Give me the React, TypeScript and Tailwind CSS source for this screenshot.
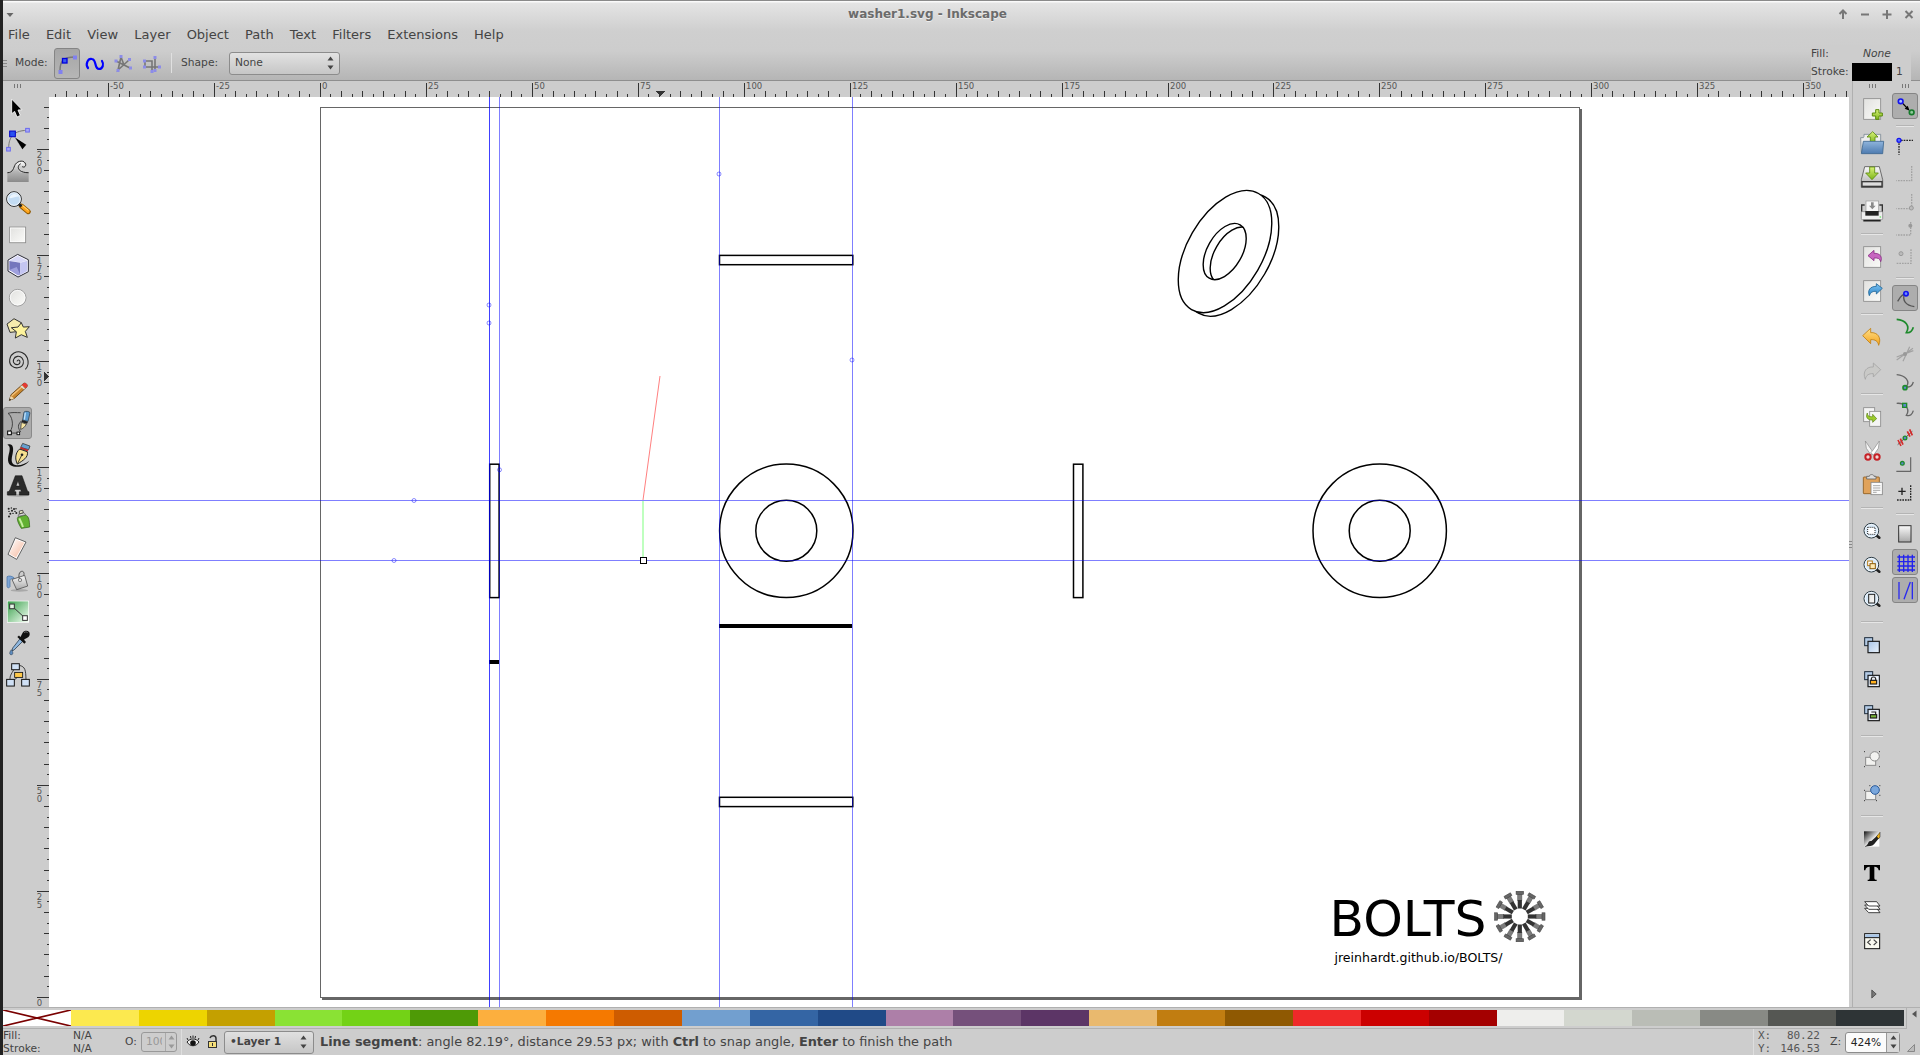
import React from "react";
import type { ReactNode } from "react";

const range = (a: number, b: number) => Array.from({ length: b - a + 1 }, (_, i) => a + i);

const SWATCHES = [
  "#fce94f", "#edd400", "#c4a000", "#8ae234", "#73d216", "#4e9a06", "#fcaf3e", "#f57900", "#ce5c00",
  "#729fcf", "#3465a4", "#204a87", "#ad7fa8", "#75507b", "#5c3566", "#e9b96e", "#c17d11", "#8f5902",
  "#ef2929", "#cc0000", "#a40000", "#eeeeec", "#d3d7cf", "#babdb6", "#888a85", "#555753", "#2e3436",
];

const MENUS = ["File", "Edit", "View", "Layer", "Object", "Path", "Text", "Filters", "Extensions", "Help"];

function Gradients() {
  return (
    <svg className="absolute h-0 w-0" aria-hidden="true">
      <defs>
        <linearGradient id="gGreen" x1="0" y1="0" x2="0" y2="1"><stop offset="0" stopColor="#d9f27a" /><stop offset="1" stopColor="#7cb518" /></linearGradient>
        <linearGradient id="gBlue" x1="0" y1="0" x2="0" y2="1"><stop offset="0" stopColor="#8fb4dc" /><stop offset="1" stopColor="#4d7bb0" /></linearGradient>
        <linearGradient id="gPale" x1="0" y1="0" x2="1" y2="1"><stop offset="0" stopColor="#a9c4e6" /><stop offset="1" stopColor="#eaf3fc" /></linearGradient>
        <linearGradient id="gSky" x1="0" y1="0" x2="0" y2="1"><stop offset="0" stopColor="#7cc4f4" /><stop offset="1" stopColor="#2f86c8" /></linearGradient>
        <linearGradient id="gGold" x1="0" y1="0" x2="0" y2="1"><stop offset="0" stopColor="#ffe08a" /><stop offset="1" stopColor="#f3a21c" /></linearGradient>
        <linearGradient id="gPaper" x1="0" y1="0" x2="1" y2="1"><stop offset="0" stopColor="#e2e2e0" /><stop offset="1" stopColor="#fafaf8" /></linearGradient>
        <linearGradient id="gMetal" x1="0" y1="0" x2="0" y2="1"><stop offset="0" stopColor="#fafafa" /><stop offset="1" stopColor="#a8a8a8" /></linearGradient>
        <linearGradient id="gWave" x1="0" y1="0" x2="0" y2="1"><stop offset="0" stopColor="#fff" /><stop offset="0.5" stopColor="#b5b5b5" /><stop offset="1" stopColor="#8a8a8a" /></linearGradient>
        <linearGradient id="gSkin" x1="0" y1="0" x2="1" y2="1"><stop offset="0" stopColor="#fff" /><stop offset="1" stopColor="#f5b79c" /></linearGradient>
        <linearGradient id="gMint" x1="0" y1="0" x2="1" y2="1"><stop offset="0" stopColor="#3aa04c" /><stop offset="1" stopColor="#f4fff4" /></linearGradient>
        <linearGradient id="gInk" x1="0" y1="0" x2="1" y2="1"><stop offset="0" stopColor="#111" /><stop offset="0.6" stopColor="#fff" /></linearGradient>
      </defs>
    </svg>
  );
}

/* ---------- left tool icons ---------- */

const NODE = { fill: "#a9a9f5", stroke: "#6b6bf0", strokeWidth: 3 };

const TOOLS: { name: string; art: ReactNode }[] = [
  { name: "Select", art: <path d="M-19-29V15L-10 8L-3 25L7 20L0 4L12 3Z" fill="#000" stroke="#fff" strokeWidth="2.5" /> },
  {
    name: "Node", art: <g>
      <path d="M-28 26C-28 0-20-28 28-28" fill="none" stroke="#777" strokeWidth="3" />
      <rect x="-34" y="23" width="11" height="11" {...NODE} /><rect x="23" y="-34" width="11" height="11" {...NODE} />
      <path d="M-12-10L26 15L13 30Z" fill="#000" stroke="#fff" strokeWidth="1.5" />
      <rect x="-25" y="-26" width="17" height="17" fill="#2a52f0" stroke="#0000c8" strokeWidth="3" />
    </g>,
  },
  {
    name: "Tweak", art: <g>
      <path d="M-32 4C-14 4-14-12-8-22C0-34 18-36 22-24C24-16 18-12 12-16C4-22-2-10 2-2C6 4 16 4 32 4V31H-32Z" fill="url(#gWave)" />
      <path d="M-32 3C-14 3-14-12-8-22C0-34 20-36 23-22C24-14 16-12 12-16M8-24C-4-18-4 3 32 3" fill="none" stroke="#222" strokeWidth="3" />
    </g>,
  },
  {
    name: "Zoom", art: <g>
      <path d="M10 10L31 27" stroke="#8f5902" strokeWidth="15" strokeLinecap="round" /><path d="M11 10L30 26" stroke="#ffa51e" strokeWidth="10" strokeLinecap="round" /><path d="M12 7L31 23" stroke="#ffe08a" strokeWidth="3" />
      <path d="M1 3L11 11" stroke="#222" strokeWidth="8" />
      <circle cx="-12" cy="-11" r="22" fill="#c3dcf3" stroke="#222" strokeWidth="3" /><circle cx="-12" cy="-11" r="19" fill="none" stroke="#fff" strokeWidth="2.5" /><path d="M-26-14C-22-28-4-30 4-18C-6-20-14-12-26-14" fill="#eaf4fd" />
    </g>,
  },
  { name: "Rectangle", art: <g><rect x="-25" y="-23" width="48" height="47" fill="#f0f0ef" stroke="#8a8a8a" strokeWidth="2.5" /><rect x="-22" y="-20" width="42" height="41" fill="url(#gPaper)" stroke="#fff" strokeWidth="2" /></g> },
  {
    name: "Box", art: <g>
      <path d="M-1-34L31-18V18L0 34L-30 16V-17Z" fill="#fff" stroke="#2b2b3a" strokeWidth="3" strokeLinejoin="round" />
      <path d="M-1-30L27-16L7-10L-26-15Z" fill="#d9d9f8" /><path d="M-26-14L7-9V27L-26 13Z" fill="#7576bd" /><path d="M7-9L28-15V16L7 28Z" fill="#c4c5f2" /><path d="M-26 13L-4 4L7 27L0 29Z" fill="#9fa0dd" />
    </g>,
  },
  { name: "Ellipse", art: <g><circle r="25" cx="-1" fill="#eee" stroke="#909090" strokeWidth="2.5" /><circle r="22" cx="-1" fill="url(#gPaper)" stroke="#fff" strokeWidth="2" /></g> },
  {
    name: "Star", art: <g stroke="#333" strokeWidth="3" strokeLinejoin="round">
      <path d="M-12-30L10-18L4 8L-24 11L-33-14Z" fill="#f6ecad" />
      <path d="M10-18L16-5L34-6L22 8L28 26L10 18L-8 28L-5 9L-20-3L0-5Z" fill="#fdf39c" />
    </g>,
  },
  { name: "Spiral", art: <path d="M-3 2C-1-4 6-3 6 4C6 12-4 14-10 9C-18 2-13-11-2-13C10-15 18-4 16 7C13 22-6 25-17 17C-31 6-25-16-12-23C4-32 22-24 28-8C33 6 30 18 22 26" fill="none" stroke="#2a2a2a" strokeWidth="3.2" /> },
  {
    name: "Pencil", art: <g>
      <path d="M-26 26L-21 9L17-25C22-28 30-21 27-15L-11 20Z" fill="#c9872f" stroke="#5b3a0c" strokeWidth="2.5" />
      <path d="M-19 12L18-20" stroke="#f3c27b" strokeWidth="4" /><path d="M15-24C21-30 32-22 27-14L22-11L12-20Z" fill="#e53935" /><path d="M11-19L21-10L18-7L7-16Z" fill="#ddd" /><path d="M-26 26L-22 12L-12 20Z" fill="#f0d6a8" /><path d="M-27 27L-25 20L-20 24Z" fill="#222" />
    </g>,
  },
  {
    name: "Pen", art: <g>
      <path d="M-26 28C-8 10-20-24-30-28C-20-32-4-30 8-30M-20 31H2M8 28C-6 8 6 2 8-4" fill="none" stroke="#444" strokeWidth="3" />
      <path d="M14-8L18-32C22-36 34-34 36-30L30-4Z" fill="#5b9bd0" stroke="#234" strokeWidth="2" /><path d="M22-30L19-9" stroke="#c4e2f7" strokeWidth="4" /><path d="M12-8L30-3L27 3L10-2Z" fill="#222" /><path d="M10-1L25 4C22 12 14 18 8 20Z" fill="#f4e3a1" stroke="#222" strokeWidth="2" />
      <rect x="-31" y="25" width="11" height="11" fill="#fff" stroke="#000" strokeWidth="3" /><rect x="-3" y="28" width="8" height="8" fill="#fff" stroke="#000" strokeWidth="2.5" />
    </g>,
  },
  {
    name: "Calligraphy", art: <g>
      <path d="M-32-30C-16-36-12-22-16-4C-20 14-22 26-8 31C6 34 20 28 34 18C22 34 4 38-14 35C-36 30-30 8-26-8C-24-20-24-26-32-30Z" fill="#111" />
      <path d="M14-34L36-26L32-15L8-22Z" fill="#69a0cf" stroke="#222" strokeWidth="2" /><path d="M8-23L31-15L29-10L6-18Z" fill="#c62828" />
      <path d="M5-17L28-9C32 8 14 18-2 28C-10 12-8-6 5-17Z" fill="#f7e08f" stroke="#222" strokeWidth="3" /><path d="M-1 26L11 2" stroke="#222" strokeWidth="2.5" /><circle cx="12" cy="0" r="4" fill="#222" />
    </g>,
  },
  {
    name: "Text", art: <g>
      <ellipse cx="0" cy="29" rx="32" ry="4" fill="#a5a5a5" />
      <path fillRule="evenodd" d="M-32 28V18C-27 18-25 15-23 9L-8-30H12L27 12C29 17 30 18 33 18V28H4V18H10L8 11H-9L-11 18H-6V28ZM-6 1H5L0-15Z" fill="#2b2b2b" stroke="#0c0c0c" strokeWidth="1.5" />
    </g>,
  },
  {
    name: "Spray", art: <g>
      <path d="M0-2L22-8C34-4 34 10 35 28L10 32C4 22-2 12-2 2Z" fill="#62b132" stroke="#2c5c12" strokeWidth="2" /><path d="M4 2C8 10 12 18 15 28" stroke="#c6ef9f" strokeWidth="6" fill="none" />
      <path d="M0-4L2-10L18-15L23-9Z" fill="#ddd" stroke="#555" strokeWidth="2" /><path d="M4-12V-20L14-22L16-15Z" fill="#f2f2ce" stroke="#333" strokeWidth="2.5" />
      {[[-28, -27], [-20, -29], [-12, -26], [-27, -19], [-18, -21], [-9, -19], [-23, -12], [-15, -13], [-27, -4], [-6, -27], [-5, -14]].map(([x, y], i) => <circle key={i} cx={x} cy={y} r={i % 2 ? 2.2 : 3} fill="#222" />)}
    </g>,
  },
  { name: "Eraser", art: <g><path d="M-8-33L24-20L-4 32L-30 17Z" fill="#fff" stroke="#444" strokeWidth="2.5" strokeLinejoin="round" /><path d="M-6-28L19-18L-6 26L-26 15Z" fill="url(#gSkin)" /></g> },
  {
    name: "Bucket", art: <g>
      <ellipse cx="4" cy="29" rx="26" ry="4" fill="#a8a8a8" /><path d="M-33-12C-28-16-18-14-12-9L-16-4C-20-8-24-6-24 2V18C-27 23-32 22-33 17Z" fill="#7ea6d6" stroke="#3f6ca3" strokeWidth="2" />
      <path d="M-18-4L20-16L29 16L-4 27Z" fill="url(#gMetal)" stroke="#555" strokeWidth="2.5" strokeLinejoin="round" /><path d="M4-6C0-20 6-30 14-28C20-26 18-18 17-15" fill="none" stroke="#555" strokeWidth="3" /><circle cx="6" cy="-2" r="5" fill="#ddd" stroke="#555" strokeWidth="2" />
    </g>,
  },
  {
    name: "Gradient", art: <g>
      <rect x="-33" y="-33" width="66" height="66" fill="#fff" /><rect x="-31" y="-31" width="62" height="62" fill="url(#gMint)" /><path d="M-18-17L20 18" stroke="#333" strokeWidth="3" />
      <rect x="-25" y="-23" width="14" height="14" fill="#e4f5e6" stroke="#333" strokeWidth="3" /><rect x="14" y="12" width="14" height="14" fill="#fff" stroke="#333" strokeWidth="3" />
    </g>,
  },
  {
    name: "Dropper", art: <g>
      <path d="M6-12L14-4L-12 22L-18 24L-16 16Z" fill="#8fb7df" stroke="#345" strokeWidth="2.5" /><path d="M-2-17L19 3L24-2L18-9C26-16 34-16 35-25C37-37 20-40 14-30C10-24 10-20 7-17L3-22Z" fill="#111" /><path d="M18-30C22-34 28-33 29-29" fill="none" stroke="#777" strokeWidth="2.5" />
      <path d="M-20 21C-27 30-26 36-20 36C-14 36-14 28-20 21Z" fill="#5d8cbf" stroke="#234" strokeWidth="1.5" />
    </g>,
  },
  {
    name: "Connector", art: <g>
      <path d="M-12-16C-22 0-24 4-24 14M4-28C22-24 23-14 24 14M-2 8L-14 18" fill="none" stroke="#222" strokeWidth="2.5" />
      <rect x="-19" y="-33" width="23" height="18" fill="#cfe0f5" stroke="#111" strokeWidth="3" /><rect x="-10" y="-7" width="24" height="15" fill="#ffc94a" stroke="#111" strokeWidth="2.5" /><rect x="-34" y="14" width="23" height="20" fill="#cfe0f5" stroke="#111" strokeWidth="3" /><rect x="11" y="14" width="23" height="20" fill="#cfe0f5" stroke="#111" strokeWidth="3" />
    </g>,
  },
];

/* ---------- command bar icons ---------- */

const Sheet = () => <rect x="-25" y="-31" width="51" height="62" fill="url(#gPaper)" stroke="#8a8a8a" strokeWidth="2.5" />;
const Lens = () => (
  <g><path d="M12 12L22 20" stroke="#222" strokeWidth="8" strokeLinecap="round" /><circle cx="-2" cy="-1" r="22" fill="#d6e8f8" stroke="#2c3a42" strokeWidth="3" /><circle cx="-2" cy="-1" r="18.5" fill="none" stroke="#fff" strokeWidth="2" /></g>
);
const Squares = () => (
  <g><rect x="-22" y="-22" width="24" height="24" fill="#b4cbe6" stroke="#1c2a3a" strokeWidth="3" /><rect x="-12" y="-11" width="34" height="34" fill="url(#gPale)" stroke="#1a1a1a" strokeWidth="3.5" /></g>
);

const COMMANDS: { name: string; art?: ReactNode }[] = [
  { name: "New", art: <g><Sheet /><path d="M11 2H21V12H31V21H21V31H11V21H1V12H11Z" fill="url(#gGreen)" stroke="#5b8a0d" strokeWidth="3" /></g> },
  { name: "Open", art: <g><path d="M-34-16H-26L-24-20V-26H26V28H-32Z" fill="#eee" stroke="#7b8894" strokeWidth="2.5" /><path d="M2-34L18-18H9V0H-5V-18H-15Z" fill="url(#gGreen)" stroke="#5b8a0d" strokeWidth="2.5" /><path d="M-26-5H35L32 32H-32Z" fill="url(#gBlue)" stroke="#3f678f" strokeWidth="2.5" /></g> },
  { name: "Save", art: <g><path d="M-22-31H22L32 8V31H-32V8Z" fill="url(#gMetal)" stroke="#555" strokeWidth="2.5" /><path d="M-32 12H32V31H-32Z" fill="#3a3a3a" /><rect x="-28" y="16" width="56" height="10" fill="#ddd" /><path d="M-7-30H8V-12H19L0 8L-19-12H-7Z" fill="url(#gGreen)" stroke="#5b8a0d" strokeWidth="2.5" /></g> },
  { name: "Print", art: <g><path d="M-31 2V-18H-22M31 2V-18H22" fill="none" stroke="#333" strokeWidth="4" /><rect x="-18" y="-30" width="38" height="32" fill="#f6f6f6" stroke="#999" strokeWidth="2" /><path d="M-3-26H5V-16H11L1-5L-9-16H-3Z" fill="#8a8a8a" /><rect x="-32" y="2" width="64" height="24" rx="3" fill="#eee" stroke="#777" strokeWidth="2" /><rect x="-20" y="0" width="40" height="14" fill="#222" /><path d="M-26 29H26" stroke="#222" strokeWidth="5" /><circle cx="25" cy="18" r="2.5" fill="#5ce65c" /></g> },
  { name: "sep" },
  { name: "Import", art: <g><Sheet /><path d="M-12-4L6-20V-11C24-12 32 0 26 14C24 5 18 2 6 3V11Z" fill="#c765c0" stroke="#8a2f85" strokeWidth="2.5" strokeLinejoin="round" /></g> },
  { name: "Export", art: <g><Sheet /><path d="M31-8L13-22V-14C-6-14-14-2-8 14C-5 4 2 0 13 1V9Z" fill="url(#gSky)" stroke="#1f6596" strokeWidth="2.5" strokeLinejoin="round" /></g> },
  { name: "sep" },
  { name: "Undo", art: <path d="M-28-4L-4-26V-13C16-15 30 2 20 25C18 13 10 7-4 8V20Z" fill="url(#gGold)" stroke="#c07f14" strokeWidth="2.5" strokeLinejoin="round" /> },
  { name: "Redo", art: <path d="M26-4L4-24V-12C-16-14-30 2-20 25C-18 13-10 7 4 8V18Z" fill="#c9c9c7" stroke="#a5a5a5" strokeWidth="2.5" strokeLinejoin="round" /> },
  { name: "sep" },
  { name: "Duplicate", art: <g><rect x="-25" y="-28" width="33" height="42" fill="#f4f4f4" stroke="#8a8a8a" strokeWidth="2.5" /><rect x="-7" y="-17" width="33" height="45" fill="#f4f4f4" stroke="#8a8a8a" strokeWidth="2.5" /><path d="M-14-12C-14-2-8-1 2-1V-8L14 5L2 16V9C-14 10-20 0-14-12Z" fill="#9ccb2c" stroke="#56800f" strokeWidth="2" /></g> },
  { name: "Cut", art: <g><path d="M-20-30L-17-8L-3 12L4 6L-2-4Z" fill="#f4f4f4" stroke="#888" strokeWidth="2" /><path d="M22-30L19-8L5 12L-4 6L4-4Z" fill="#fff" stroke="#888" strokeWidth="2" /><circle cx="-12" cy="18" r="8" fill="#f0d6d6" stroke="#c62026" strokeWidth="6" /><circle cx="15" cy="18" r="8" fill="#f0d6d6" stroke="#c62026" strokeWidth="6" /></g> },
  { name: "Paste", art: <g><rect x="-26" y="-24" width="48" height="50" rx="2" fill="#e0a25a" stroke="#8b5a1d" strokeWidth="2.5" /><path d="M-16-18V-26H-8C-8-33 6-33 6-26H12V-18Z" fill="#ddd" stroke="#666" strokeWidth="2.5" /><rect x="-3" y="-8" width="34" height="37" fill="#fafafa" stroke="#888" strokeWidth="2.5" /><path d="M3 2H25M3 9H25M3 16H25M3 22H14" stroke="#999" strokeWidth="2.5" /></g> },
  { name: "sep" },
  { name: "Zoom selection", art: <g><Lens /><rect x="-13" y="-11" width="22" height="21" fill="#fff" stroke="#222" strokeWidth="3" strokeDasharray="3 3" /></g> },
  { name: "Zoom drawing", art: <g><Lens /><rect x="-13" y="-12" width="14" height="14" fill="#fff" stroke="#b57a14" strokeWidth="3" /><rect x="-6" y="-4" width="16" height="15" fill="#ffe9b0" stroke="#8a5a0a" strokeWidth="3" /></g> },
  { name: "Zoom page", art: <g><Lens /><rect x="-10" y="-14" width="18" height="26" fill="url(#gPaper)" stroke="#222" strokeWidth="3" /></g> },
  { name: "sep" },
  { name: "Duplicate object", art: <Squares /> },
  { name: "Clone", art: <g><Squares /><rect x="-9" y="-8" width="28" height="28" fill="#f3f7fc" /><path d="M-2 5V0C-2-8 11-8 11 0V5" fill="none" stroke="#222" strokeWidth="3.5" /><rect x="-5" y="4" width="19" height="11" fill="#ffb01f" stroke="#1a1a1a" strokeWidth="3.5" /></g> },
  { name: "Unlink clone", art: <g><Squares /><rect x="-9" y="-8" width="28" height="28" fill="#f3f7fc" /><path d="M-2-3H11V5" fill="none" stroke="#222" strokeWidth="3.5" /><rect x="-5" y="5" width="19" height="10" fill="#76b33a" stroke="#1a1a1a" strokeWidth="3.5" /></g> },
  { name: "sep" },
  { name: "Group", art: <g><rect x="-19" y="-5" width="30" height="24" fill="#f2f2f0" stroke="#8a8a8a" strokeWidth="3" /><circle cx="8" cy="-8" r="14" fill="#f2f2f0" stroke="#8a8a8a" strokeWidth="3" /><path d="M-24-22H-21M-24 23H-21M21 23H24M21-22H24" stroke="#333" strokeWidth="3" /></g> },
  { name: "Ungroup", art: <g><rect x="-19" y="-5" width="30" height="25" fill="#f2f2f0" stroke="#8a8a8a" strokeWidth="3" /><circle cx="9" cy="-9" r="13" fill="#7aa7dc" stroke="#2c5c9c" strokeWidth="3" /><path d="M-24-8H-21M-24 23H-21M12 23H15M-8-22H-5M22-22H25M22 7H25" stroke="#333" strokeWidth="3" /></g> },
  { name: "sep" },
  { name: "Fill and stroke", art: <g><rect x="-24" y="-23" width="46" height="46" fill="url(#gInk)" /><path d="M-21 22C-8 16-14 4-2 6L18-12L22-4L6 16C0 22-8 22-21 23Z" fill="#222" /><path d="M14-8L24-20V-6L19 0Z" fill="#f2b41c" stroke="#111" strokeWidth="1.5" /></g> },
  { name: "Text and font", art: <path d="M-24-24H24V-8H20C19-15 15-19 7-19V14C7 19 9 20 14 20V24H-13V20C-8 20-7 19-7 14V-19C-15-19-19-15-20-8H-24Z" fill="#000" /> },
  { name: "Layers", art: <g fill="#fff" stroke="#222" strokeWidth="2.5" strokeLinejoin="round"><path d="M-22 4H14L24 17H-10Z" /><path d="M-22-6H14L24 7H-10Z" /><path d="M-22-16H14L24-3H-10Z" /></g> },
  { name: "XML editor", art: <g><rect x="-22" y="-22" width="45" height="45" fill="#f8f8ef" stroke="#111" strokeWidth="3" /><rect x="-20" y="-20" width="41" height="9" fill="#a9c6e8" /><path d="M-22-10H22" stroke="#111" strokeWidth="3" /><path d="M-4-4L-13 4L-4 12M5-4L14 4L5 12" fill="none" stroke="#444" strokeWidth="3.5" /></g> },
];

/* ---------- snap bar icons ---------- */

const DASH = { fill: "none", strokeWidth: 4, strokeDasharray: "5 3" };

const SNAPS: { name: string; on?: boolean; art?: ReactNode }[] = [
  { name: "Snap", on: true, art: <g><path d="M-7-8L8 8" stroke="#000" strokeWidth="4" /><path d="M14 14L-1 8L8-1Z" fill="#000" /><circle cx="-13" cy="-14" r="7" fill="#a9c0ff" stroke="#1414ee" strokeWidth="5" /><circle cx="20" cy="19" r="7" fill="#8fc79a" stroke="#157a2a" strokeWidth="5" /></g> },
  { name: "sep" },
  { name: "Snap bounding box", art: <g><path d="M-12-17H24M-18-8V26" stroke="#222" {...DASH} /><circle cx="-18" cy="-17" r="6" fill="#5a78ff" stroke="#1414ee" strokeWidth="4" /></g> },
  { name: "Snap bbox edges", art: <path d="M20-24V20H-26" stroke="#a2a2a2" {...DASH} /> },
  { name: "Snap bbox corners", art: <g><path d="M20-24V20H-26" stroke="#a2a2a2" {...DASH} /><circle cx="19" cy="18" r="6" fill="#bbb" stroke="#9a9a9a" strokeWidth="3" /></g> },
  { name: "Snap bbox midpoints", art: <g><path d="M17-24V15H-26" stroke="#a2a2a2" {...DASH} /><circle cx="16" cy="-13" r="6" fill="#999" /></g> },
  { name: "Snap bbox centers", art: <g><path d="M18-26V16H-26" stroke="#a2a2a2" {...DASH} /><circle cx="-12" cy="-13" r="6" fill="#bbb" stroke="#9a9a9a" strokeWidth="3" /></g> },
  { name: "sep" },
  { name: "Snap nodes", on: true, art: <g><path d="M-22 10C-14-6-4-14 8-14M-2-11C-8 8 2 22 28 26" fill="none" stroke="#555" strokeWidth="4" /><circle cx="3" cy="-13" r="6.5" fill="#6b8cff" stroke="#1414ee" strokeWidth="5" /></g> },
  { name: "Snap to paths", art: <path d="M-25-20C2-18 16 0 4 20C16 22 22 14 25 4" fill="none" stroke="#1e8a2c" strokeWidth="5" /> },
  { name: "Snap intersections", art: <g><path d="M-25 18L24-17M-25 9L25-10M-6 22L14-22" stroke="#a2a2a2" strokeWidth="3.5" /><circle cx="0" cy="0" r="6" fill="#999" /></g> },
  { name: "Snap cusp nodes", art: <g><path d="M-25-22C2-20 16-2 4 14C16 18 22 10 25 0" fill="none" stroke="#666" strokeWidth="4" /><circle cx="0" cy="17" r="6" fill="#5c86d0" stroke="#1e8a2c" strokeWidth="5" /></g> },
  { name: "Snap smooth nodes", art: <g><path d="M-25-20C2-22 16-2 4 16C16 20 22 12 25 2" fill="none" stroke="#666" strokeWidth="4" /><rect x="-7" y="-20" width="12" height="12" fill="#5c86d0" stroke="#1e8a2c" strokeWidth="4" /></g> },
  { name: "Snap line midpoints", art: <g><path d="M-22 20L22-20" stroke="#555" strokeWidth="3" /><path d="M-21 6L-12 24M-14 2L-6 20M7-20L15-4M14-26L22-8" stroke="#d42a2a" strokeWidth="5" /><circle cx="0" cy="0" r="5.5" fill="#5c86d0" stroke="#1e8a2c" strokeWidth="4" /></g> },
  { name: "Snap object centers", art: <g><path d="M17-26V16H-26" fill="none" stroke="#666" strokeWidth="3.5" /><circle cx="-8" cy="-8" r="5.5" fill="#5c86d0" stroke="#1e8a2c" strokeWidth="4" /></g> },
  { name: "Snap rotation centers", art: <g><path d="M17-26V18H-26" stroke="#222" {...DASH} /><path d="M-20-8H2M-9-19V3" stroke="#222" strokeWidth="4" /></g> },
  { name: "sep" },
  { name: "Snap page border", art: <rect x="-19" y="-25" width="37" height="49" fill="url(#gMetal)" stroke="#333" strokeWidth="3" /> },
  { name: "Snap grid", on: true, art: <path d="M-23-15H30M-23-1H30M-23 12H30M-23 24H30M-17-22V30M-4-22V30M9-22V30M22-22V30" stroke="#2222ee" strokeWidth="4" /> },
  { name: "Snap guides", on: true, art: <path d="M-18-24V28M22-24V28M-3 28L16-24" stroke="#2a2af0" strokeWidth="4" /> },
];

function Sep({ wide }: { wide?: boolean }) {
  return (
    <div className="flex h-3 items-center justify-center">
      <div className={wide ? "h-0.5 w-[22px] border-t border-[#b4b4b4] bg-[#e6e6e6]" : "h-0.5 w-[18px] border-t border-[#b4b4b4] bg-[#e6e6e6]"} />
    </div>
  );
}

function Grip() {
  return (
    <div className="flex h-1 justify-center gap-[2px]">
      <div className="w-px bg-[#777]" /><div className="w-px bg-[#777]" /><div className="w-px bg-[#777]" />
    </div>
  );
}

function Arrows({ dim }: { dim?: boolean }) {
  return (
    <svg className="h-3.5 w-[7px] shrink-0" viewBox="0 0 7 14"><path d="M3.500 .5L6.500 4.500H.5ZM.5 9.500H6.500L3.500 13.500Z" fill={dim ? "#999" : "#444"} /></svg>
  );
}

/* ---------- window top ---------- */

function Header() {
  return (
    <header className="flex h-[81px] shrink-0 flex-col border-t border-b border-t-[#8a8a8a] border-b-[#8f8f8f] bg-[linear-gradient(to_bottom,#fafafa_0,#fafafa_1px,#e4e4e4_2px,#cfcfcf_30px,#cdcdcd_50px,#b5b5b5_79px)]">
      <div className="relative flex h-[23px] shrink-0 items-center justify-between pl-[3px] pr-[5px]">
        <svg className="mt-1 h-2 w-2" viewBox="0 0 8 8"><path d="M.5 2H7.500L4 6Z" fill="#666" /></svg>
        <div className="absolute inset-x-0 top-[5px] pr-[68px] text-center text-[12px] leading-4 font-bold text-[#6b6b6b] [text-shadow:0_1px_0_#eee]">washer1.svg - Inkscape</div>
        <svg className="mt-0.5 h-3 w-20" viewBox="0 0 80 12" fill="none" stroke="#777" strokeWidth="2">
          <path d="M8 11V3M4.500 6L8 2.500L11.500 6M26 6.500H34M47.500 6.500H56.500M52 2V11M70.500 3L77.500 10M77.500 3L70.500 10" />
        </svg>
      </div>
      <nav className="flex h-[22px] shrink-0 items-center gap-[16.150px] pl-[5px] text-[13px] text-[#444]">
        {MENUS.map((m) => <span key={m}>{m}</span>)}
      </nav>
      <div className="flex h-[34px] items-center text-[10.700px] text-[#444]">
        <div className="flex w-1 flex-col gap-[2px]"><div className="h-px bg-[#888]" /><div className="h-px bg-[#888]" /><div className="h-px bg-[#888]" /></div>
        <span className="w-[47px] pl-2">Mode:</span>
        <div className="flex">
          <div className="h-[31px] w-[26px] rounded-[3px] border border-[#858585] bg-linear-to-b from-[#a6a6a6] to-[#b6b6b6]">
            <svg className="h-full w-full" viewBox="0 0 24 29"><path d="M5 22C5 12 8 8 20 8" fill="none" stroke="#777" strokeWidth="1.500" /><rect x="3.500" y="21" width="4" height="4" fill="#8080f0" /><rect x="18" y="6.500" width="4" height="4" fill="#8080f0" /><rect x="7.500" y="9.500" width="4.500" height="4.500" fill="#3a5af0" stroke="#00d" strokeWidth="1.300" /></svg>
          </div>
          <svg className="h-[31px] w-[29px]" viewBox="0 0 29 31"><path d="M8 20C5 16 8 10 12 11C17 12 14 21 19 21C23 21 24 16 22 13" fill="none" stroke="#00f" strokeWidth="2.200" strokeLinecap="round" /></svg>
          <svg className="h-[31px] w-[29px]" viewBox="0 0 29 31"><path d="M12 9L9 22L20 12M7 13L21 20M12 9L15 17" fill="none" stroke="#777" strokeWidth="1.600" /><g fill="#8c8ce8"><rect x="10.500" y="7" width="3" height="3" /><rect x="5.500" y="11.500" width="3" height="3" /><rect x="19" y="10" width="3" height="3" /><rect x="7.500" y="21" width="3" height="3" /><rect x="20" y="18.500" width="3" height="3" /></g></svg>
          <svg className="h-[31px] w-[29px]" viewBox="0 0 29 31"><path d="M17 10V22M7 13V19H22M7 13H14V23" fill="none" stroke="#777" strokeWidth="1.600" /><g fill="#8c8ce8"><rect x="15.500" y="8" width="3" height="3" /><rect x="5" y="11.500" width="3" height="3" /><rect x="5" y="17.500" width="3" height="3" /><rect x="20" y="17.500" width="3" height="3" /><rect x="12.500" y="22" width="3" height="3" /><rect x="15.500" y="21" width="3" height="3" /></g></svg>
        </div>
        <div className="ml-[4px] h-5 w-px bg-[#e0e0e0]" />
        <span className="w-[57px] pl-[9px]">Shape:</span>
        <div className="flex h-[23px] w-[111px] items-center justify-between rounded-[3px] border border-[#8c8c8c] bg-linear-to-b from-[#e2e2e2] to-[#c6c6c6] pr-[5px] pl-[5px]">None<Arrows /></div>
        <div className="z-10 mr-[9px] -mb-px ml-auto grid h-[36px] w-[100px] grid-cols-[41px_40px_1fr] grid-rows-2 self-end bg-[#cdcdcd]">
          <span className="leading-[17px]">Fill:</span><span className="pl-[11px] leading-[17px] whitespace-nowrap italic">None</span><span />
          <span className="leading-[18px]">Stroke:</span><span className="bg-black" /><span className="pl-[4px] leading-[18px]">1</span>
        </div>
      </div>
    </header>
  );
}

/* ---------- rulers and canvas ---------- */

const UNIT = 4.238;

function RulerX() {
  return (
    <svg className="block h-4 w-[1800px]" viewBox="49 81 1800 16" shapeRendering="crispEdges">
      {range(-25, 144).map((i) => {
        const x = Math.floor(320.4 + i * 2.5 * UNIT);
        const top = i % 10 === 0 ? 83 : i % 2 === 0 ? 91 : 94;
        return x >= 49 && x < 1849 ? <rect key={i} x={x} y={top} width="1" height={97 - top} fill="#333" /> : null;
      })}
      {range(-2, 14).map((i) => (
        <text key={i} x={Math.floor(320.4 + i * 25 * UNIT) + 2} y="89" fontSize="8.500" fill="#555">{i * 25}</text>
      ))}
      <path d="M656 91H665L660.500 96Z" fill="#333" />
    </svg>
  );
}

function RulerY() {
  return (
    <svg className="block h-[910px] w-[13px]" viewBox="36 97 13 910" shapeRendering="crispEdges">
      {range(0, 84).map((i) => {
        const y = Math.floor(997.2 - i * 2.5 * UNIT);
        const left = i % 10 === 0 ? 37 : i % 2 === 0 ? 44 : 47;
        return <rect key={i} x={left} y={y} width={49 - left} height="1" fill="#333" />;
      })}
      {range(0, 8).map((i) =>
        String(i * 25).split("").map((d, k) => (
          <text key={`${i}-${k}`} x="36.800" y={Math.floor(997.2 - i * 25 * UNIT) + 9 + k * 8} fontSize="8.500" fill="#555">{d}</text>
        ))
      )}
      <path d="M44 372V381L49 376.500Z" fill="#333" />
    </svg>
  );
}

function IsoWasher() {
  return (
    <g transform="translate(1150.200 170.200) scale(.3333)" fill="none" stroke="#000" strokeWidth="4.200">
      <clipPath id="hole"><ellipse rx="92.500" ry="52" transform="translate(223.500 244) rotate(-60)" /></clipPath>
      <ellipse rx="201" ry="113" transform="translate(245.500 255) rotate(-60)" />
      <ellipse rx="201" ry="113" transform="translate(224.500 244) rotate(-60)" fill="#fff" />
      <g clipPath="url(#hole)"><ellipse rx="92.500" ry="52" transform="translate(244.500 255) rotate(-60)" /></g>
      <ellipse rx="92.500" ry="52" transform="translate(223.500 244) rotate(-60)" />
    </g>
  );
}

function Canvas() {
  return (
    <svg className="block h-[910px] w-[1800px] bg-white" viewBox="49 97 1800 910">
      <g shapeRendering="crispEdges">
        <path d="M1579 109H1582V1000H322V997H1579Z" fill="#666" />
        <rect x="320.500" y="107.500" width="1259" height="890" fill="#fff" stroke="#666" />
      </g>
      <g fill="none" stroke="#000" strokeWidth="1.500">
        <rect x="719.500" y="255.400" width="133.300" height="9.300" />
        <rect x="719.500" y="797.300" width="133.300" height="9.300" />
        <rect x="489.700" y="464.200" width="9.400" height="133.400" />
        <rect x="1073.500" y="464.200" width="9.400" height="133.400" />
        <circle cx="786.300" cy="530.800" r="66.700" /><circle cx="786.300" cy="530.800" r="30.500" />
        <circle cx="1379.700" cy="530.800" r="66.700" /><circle cx="1379.700" cy="530.800" r="30.500" />
      </g>
      <rect x="719" y="624" width="133" height="4" /><rect x="489" y="660" width="10" height="4" />
      <IsoWasher />
      <g fill="#0000ff" fillOpacity=".5" shapeRendering="crispEdges">
        <rect x="489" y="97" width="1" height="910" fillOpacity=".75" /><rect x="499" y="97" width="1" height="910" />
        <rect x="719" y="97" width="1" height="910" /><rect x="852" y="97" width="1" height="910" />
        <rect x="49" y="500" width="1800" height="1" /><rect x="49" y="560" width="1800" height="1" />
      </g>
      <g fill="none" stroke="#0000ff" strokeOpacity=".45">
        {[[719, 174], [489, 305], [489, 323], [852, 360], [499.5, 469.8], [414, 500.5], [394, 560.5]].map(([x, y]) => <circle key={`${x}-${y}`} cx={x} cy={y} r="2" />)}
      </g>
      <path d="M660 376L643 500" stroke="#ff0000" strokeOpacity=".5" />
      <rect x="642" y="501" width="2" height="56" fill="#bfffbf" />
      <rect x="640.500" y="557.500" width="6" height="6" fill="#fff" stroke="#000" />
      <text x="1329.500" y="936.300" fontSize="49.500" textLength="157" lengthAdjust="spacingAndGlyphs">BOLTS</text>
      <text x="1334.500" y="961.500" fontSize="12.500" textLength="168" lengthAdjust="spacingAndGlyphs">jreinhardt.github.io/BOLTS/</text>
      <g transform="translate(1519.800 916.500)">
        {range(0, 11).map((i) => (
          <g key={i} transform={`rotate(${i * 30})`}>
            <rect x="-2.100" y="-23" width="4.200" height="7" fill="#7c7c7c" stroke="#555" strokeWidth=".5" /><rect x="-2.100" y="-16.500" width="4.200" height="8.500" fill="#333" /><rect x="-3.700" y="-25.200" width="7.400" height="3" fill="#666" stroke="#444" strokeWidth=".6" />
          </g>
        ))}
      </g>
    </svg>
  );
}

/* ---------- bottom bars ---------- */

function Palette() {
  return (
    <div className="flex h-[22px] shrink-0 border-t border-[#b0b0b0]">
      <div className="flex w-[1904px] border-r border-b border-[#b0b0b0] pt-0.5 pr-0.5 pb-[3px]">
        <svg className="h-4 min-w-0 flex-1 bg-white" viewBox="0 0 67 16" preserveAspectRatio="none"><path d="M0 0L67 16M0 16L67 0" stroke="#7a0000" strokeWidth="1.700" /></svg>
        {SWATCHES.map((c) => <div key={c} className="h-4 min-w-0 flex-1" style={{ backgroundColor: c }} />)}
      </div>
      <svg className="mt-0.5 ml-1 h-2 w-1.5" viewBox="0 0 6 8"><path d="M5.500 .5V7.500L1 4Z" fill="#555" /></svg>
    </div>
  );
}

function StatusBar() {
  return (
    <footer className="flex h-[26px] shrink-0 items-center overflow-hidden text-[10.700px] text-[#444]">
      <div className="grid w-[122px] grid-cols-[70px_1fr] leading-[13px]"><span>Fill:</span><span>N/A</span><span>Stroke:</span><span>N/A</span></div>
      <span className="w-4">O:</span>
      <div className="flex h-5 w-9 overflow-hidden rounded-[3px] border border-[#999] text-[#999]">
        <span className="w-[20px] overflow-hidden pl-[4px] leading-[18px]">100</span><span className="w-[3px]" /><span className="flex flex-1 items-center justify-center border-l border-[#aaa]"><Arrows dim /></span>
      </div>
      <div className="ml-[4px] h-full w-px bg-[#dedede]" />
      <svg className="ml-[4px] h-4 w-[14px]" viewBox="0 0 14 16"><path d="M1 8C4 4 10 4 13 8C10 13 4 13 1 8Z" fill="#eee" stroke="#222" /><circle cx="7" cy="9" r="2.800" fill="#111" /><path d="M2 6L1 4M5 4.500L4.500 2M9 4.500L9.500 2M12 6L13 4M7 4V1.500" stroke="#222" /></svg>
      <svg className="ml-[7px] h-4 w-3" viewBox="0 0 12 16"><path d="M3 4C4 1 9 1 9 4.500V8" fill="none" stroke="#333" strokeWidth="1.500" /><rect x="1.500" y="7.500" width="8" height="6" fill="#f5df7a" stroke="#333" /><path d="M5.500 9V12" stroke="#333" /></svg>
      <div className="ml-[5px] flex h-[23px] w-[90px] items-center justify-between rounded-[3px] border border-[#8c8c8c] bg-linear-to-b from-[#e0e0e0] to-[#c6c6c6] pr-[6px] pl-[5px] font-bold whitespace-nowrap"><span>•Layer 1</span><Arrows /></div>
      <div className="ml-[6px] text-[12.870px] whitespace-nowrap"><b>Line segment</b>: angle 82.19°, distance 29.53 px; with <b>Ctrl</b> to snap angle, <b>Enter</b> to finish the path</div>
      <div className="ml-auto flex h-full items-center border-l border-[#dedede] pl-[4px]">
        <div className="w-[72px] font-['DejaVu_Sans_Mono',monospace] text-[11px] leading-[13px] text-[#555]">
          <div className="flex w-[62px] justify-between"><span>X:</span><span>80.22</span></div><div className="flex w-[62px] justify-between"><span>Y:</span><span>146.53</span></div>
        </div>
        <span className="w-[15px] text-[11px]">Z:</span>
        <div className="flex h-[21px] w-[55px] rounded-[3px] border border-[#8c8c8c] bg-[#fbfbfb] text-[#222]">
          <span className="w-10 text-center text-[10.700px] leading-[19px]">424%</span><span className="flex flex-1 items-center justify-center border-l border-[#999] bg-[#d8d8d8]"><Arrows /></span>
        </div>
        <svg className="mt-3 mr-[5px] ml-[7px] h-2 w-2" viewBox="0 0 8 8"><path d="M7.500 .5V7.500H.5Z" fill="#bbb" stroke="#888" /></svg>
      </div>
    </footer>
  );
}

export default function App() {
  return (
    <div className="flex h-[1055px] w-[1920px] overflow-hidden bg-[#cdcdcd] font-['DejaVu_Sans',sans-serif]">
      <Gradients />
      <div className="w-[3px] shrink-0 bg-[#222]" />
      <div className="flex min-w-0 flex-1 flex-col">
        <Header />
        <main className="flex h-[926px] shrink-0">
          <aside className="flex w-[33px] shrink-0 flex-col pt-[3px]">
            <div className="mb-[5px] pr-[4px]"><Grip /></div>
            {TOOLS.map((t) => (
              <div key={t.name} className={t.name === "Pen" ? "h-[31.440px] w-[29px] rounded-[3px] border border-[#8a8a8a] bg-[#ababab]" : "h-[31.440px] w-[29px] border border-transparent"}>
                <svg className="-mt-px h-[31.440px] w-7" viewBox="-42 -47 84 94">{t.art}</svg>
              </div>
            ))}
          </aside>
          <div className="grid w-[1813px] shrink-0 grid-cols-[13px_1800px] grid-rows-[16px_910px]">
            <div /><RulerX /><RulerY /><Canvas />
          </div>
          <div className="flex w-[3px] flex-col justify-center gap-[2px]"><div className="h-px bg-[#888]" /><div className="h-px bg-[#888]" /><div className="h-px bg-[#888]" /></div>
          <div className="flex flex-1 border-l border-[#b0b0b0]">
            <div className="flex w-[38px] flex-col items-center pt-[3px]">
              <Grip />
              <div className="mt-[4px]">
                {COMMANDS.map((c, i) => c.art ? <svg key={c.name} className="block h-[34px] w-[34px]" viewBox="-51 -51 102 102">{c.art}</svg> : <Sep key={i} wide />)}
              </div>
              <svg className="mt-[31px] ml-[4px] h-2.5 w-1.5" viewBox="0 0 6 10"><path d="M.8 1V9L5.200 5Z" fill="#777" stroke="#444" strokeWidth=".8" /></svg>
            </div>
            <div className="flex w-[28px] flex-col items-center pt-[3px]">
              <Grip />
              <div className="mt-[4px]">
                {SNAPS.map((s, i) => s.art ? (
                  <div key={s.name} className="flex h-7 w-7 items-center justify-center">
                    <div className={s.on ? "h-[26px] w-[26px] rounded-[3px] border border-[#858585] bg-[#adadad]" : "h-[26px] w-[26px] border border-transparent"}>
                      <svg className="-mt-0.5 -ml-0.5 h-7 w-7 max-w-none" viewBox="-42 -42 84 84">{s.art}</svg>
                    </div>
                  </div>
                ) : <Sep key={i} />)}
              </div>
            </div>
          </div>
        </main>
        <Palette />
        <StatusBar />
      </div>
    </div>
  );
}
